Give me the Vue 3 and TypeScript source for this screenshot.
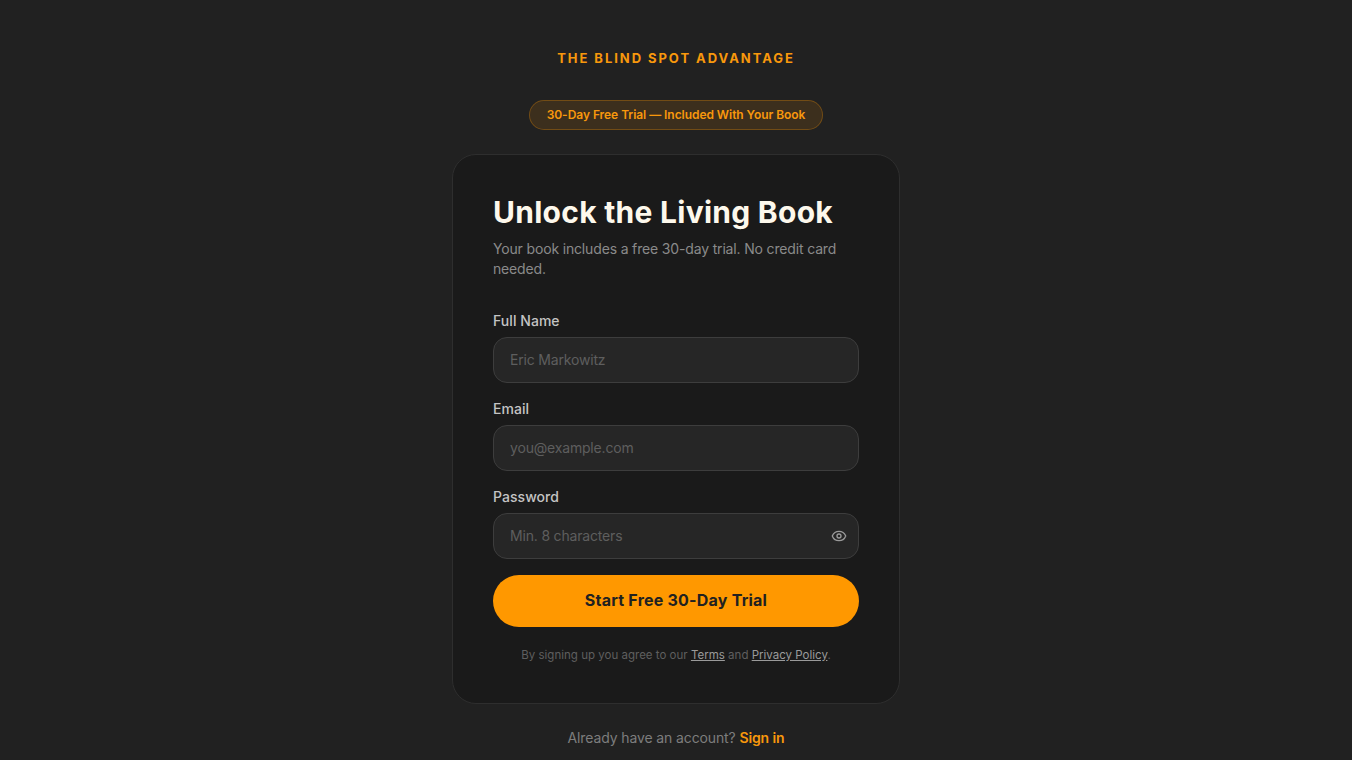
<script setup lang="ts">
const fields = [
  { label: 'Full Name', placeholder: 'Eric Markowitz', type: 'text' },
  { label: 'Email', placeholder: 'you@example.com', type: 'email' },
  { label: 'Password', placeholder: 'Min. 8 characters', type: 'password' },
]
</script>

<template>
  <main class="page">
    <div class="brand">THE BLIND SPOT ADVANTAGE</div>
    <div class="pill">30-Day Free Trial — Included With Your Book</div>
    <section class="card">
      <h1>Unlock the Living Book</h1>
      <p class="sub">Your book includes a free 30-day trial. No credit card needed.</p>
      <form class="form" @submit.prevent>
        <div v-for="f in fields" :key="f.label" class="field">
          <label>{{ f.label }}</label>
          <div class="input-wrap">
            <input :type="f.type" :placeholder="f.placeholder" />
            <svg v-if="f.type === 'password'" class="eye" width="16" height="16" viewBox="0 0 24 24" fill="none" stroke="currentColor" stroke-width="2" stroke-linecap="round" stroke-linejoin="round">
              <path d="M2.06 12.35a1 1 0 0 1 0-.7 10.75 10.75 0 0 1 19.88 0 1 1 0 0 1 0 .7 10.75 10.75 0 0 1-19.88 0" />
              <circle cx="12" cy="12" r="3" />
            </svg>
          </div>
        </div>
        <button type="submit" class="cta">Start Free 30-Day Trial</button>
      </form>
      <p class="legal">By signing up you agree to our <a href="#">Terms</a> and <a href="#">Privacy Policy</a>.</p>
    </section>
    <p class="foot">Already have an account? <a href="#">Sign in</a></p>
  </main>
</template>

<style>
html, body { margin: 0; background: #212121; }
</style>

<style scoped>
.page {
  min-height: 760px;
  box-sizing: border-box;
  background: #212121;
  display: flex;
  flex-direction: column;
  align-items: center;
  padding-top: 50px;
  font-family: Inter, "Liberation Sans", sans-serif;
}
.brand {
  font-size: 13px;
  line-height: 16px;
  font-weight: 700;
  letter-spacing: 1.95px;
  color: #f8980c;
}
.pill {
  margin-top: 34px;
  height: 30px;
  box-sizing: border-box;
  padding: 0 17px 2px;
  display: flex;
  align-items: center;
  border-radius: 15px;
  border: 1px solid rgba(255, 152, 0, 0.28);
  background: rgba(255, 152, 0, 0.12);
  color: #f8980c;
  font-size: 12px;
  font-weight: 600;
  letter-spacing: -0.05px;
}
.card {
  margin-top: 24px;
  width: 448px;
  height: 550px;
  box-sizing: border-box;
  padding: 40px;
  background: #1a1a1a;
  border: 1px solid #2e2e2e;
  border-radius: 24px;
}
h1 {
  margin: 0;
  font-size: 30px;
  line-height: 34px;
  font-weight: 700;
  letter-spacing: 0.27px;
  color: #fdf8ec;
}
.sub {
  margin: 10px 0 0;
  font-size: 14px;
  line-height: 20px;
  letter-spacing: -0.16px;
  color: #8a8a8a;
}
.form {
  margin-top: 32px;
  display: flex;
  flex-direction: column;
}
.field { margin-bottom: 16px; }
.field label {
  display: block;
  font-size: 14px;
  line-height: 20px;
  font-weight: 500;
  letter-spacing: 0.05px;
  color: #c4c4c4;
  margin-bottom: 6px;
}
.input-wrap { position: relative; }
input {
  display: block;
  width: 100%;
  height: 46px;
  box-sizing: border-box;
  padding: 0 16px 2px;
  border-radius: 14px;
  border: 1px solid #3d3d3d;
  background: #262626;
  color: #fff;
  font: 400 14px Inter, "Liberation Sans", sans-serif;
  letter-spacing: -0.18px;
  outline: none;
}
input::placeholder { color: #5e5e5e; opacity: 1; }
.eye {
  position: absolute;
  right: 12px;
  top: 15px;
  color: #9a9a9a;
}
.cta {
  height: 52px;
  border: 0;
  border-radius: 26px;
  padding: 0 0 2px;
  background: #ff9800;
  color: #212121;
  font: 700 16px Inter, "Liberation Sans", sans-serif;
  letter-spacing: 0.22px;
}
.legal {
  margin: 20px 0 0;
  text-align: center;
  font-size: 11.5px;
  line-height: 16px;
  letter-spacing: 0.01px;
  color: #5f5f5f;
}
.legal a { color: #9a9a9a; text-decoration: underline; }
.foot {
  margin: 24px 0 0;
  font-size: 14px;
  line-height: 20px;
  letter-spacing: -0.12px;
  color: #7d7d7d;
}
.foot a { color: #f8980c; font-weight: 600; text-decoration: none; }
</style>
